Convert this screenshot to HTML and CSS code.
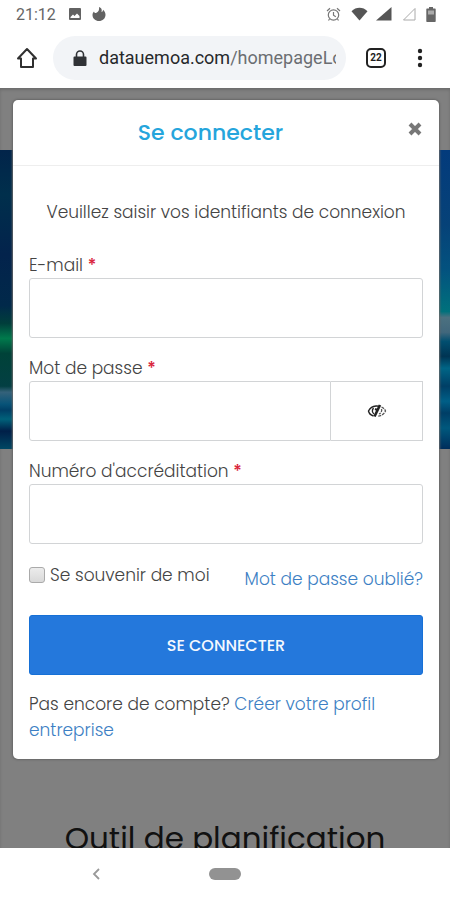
FILE: index.html
```html
<!DOCTYPE html>
<html lang="fr">
<head>
<meta charset="utf-8">
<meta name="viewport" content="width=device-width, initial-scale=1">
<title>Se connecter</title>
<link rel="stylesheet" href="styles.css">
</head>
<body>
<header class="status">
  <time class="clock">21:12</time>
  <svg class="icon" width="14" height="14" viewBox="0 0 14 14"><path fill="#626262" fill-rule="evenodd" d="M2 1h10a1 1 0 0 1 1 1v10a1 1 0 0 1-1 1H2a1 1 0 0 1-1-1V2a1 1 0 0 1 1-1zM2.500 11h9V9L9 6.500 6.500 9 5 7.500 2.500 10z"/></svg>
  <svg class="icon flame" width="14" height="14" viewBox="0 0 14 14"><path fill="#626262" d="M7 0c3 1 3 3 2.500 5 1-.3 1.500-1.300 1.500-2.300 1.500 1.300 2.500 3 2.500 5C13.500 11.500 10.500 14 7 14S.5 11.500.5 8c0-1.500.6-2.600 1.500-3.500.2 1 1 1.600 2 1.600C6.500 5 7.500 3 7 0z"/></svg>
  <span class="spacer"></span>
  <svg class="icon" width="15" height="15" viewBox="0 0 15 15" fill="none" stroke="#777" stroke-width="1.200"><circle cx="7.500" cy="8" r="5.200"/><path d="M7.500 5v3.200l2.300 1.500M1 4l3-2.700M14 4l-3-2.700M3.500 12l-1 1.500M11.500 12l1 1.500"/></svg>
  <svg class="icon wifi" width="17" height="14" viewBox="0 0 17 14"><path fill="#555" d="M.5 4.200C5-.4 12-.4 16.500 4.200L8.500 13.500z"/></svg>
  <svg class="icon signal" width="16" height="14" viewBox="0 0 16 14"><path fill="#555" d="M15.500 0v13.500H0z"/></svg>
  <svg class="icon signal-empty" width="14" height="14" viewBox="0 0 14 14"><path fill="none" stroke="#aaa" d="M13 1.500v11.500H1.500z"/></svg>
  <svg class="icon" width="10" height="15" viewBox="0 0 10 15"><path fill="#666" d="M3 0h4v1.500h2a.7.7 0 0 1 .7.700v12a.7.7 0 0 1-.7.700H1a.7.7 0 0 1-.7-.7v-12a.7.7 0 0 1 .7-.7h2z"/><path fill="#aaa" d="M2 3.500h6v4H2z"/></svg>
</header>

<nav class="toolbar">
  <button class="tool" aria-label="Accueil"><svg width="22" height="22" viewBox="0 0 22 22"><path fill="none" stroke="#303030" stroke-width="2" stroke-linejoin="round" d="M2 11.500L11 2l9 9.500h-3V20H5v-8.500z"/></svg></button>
  <div class="address">
    <svg width="14" height="17" viewBox="0 0 14 17"><path fill="#303236" d="M1.500 6.500h11a1 1 0 0 1 1 1v7.500a1 1 0 0 1-1 1h-11a1 1 0 0 1-1-1V7.500a1 1 0 0 1 1-1z"/><path fill="none" stroke="#303236" stroke-width="1.600" d="M3.500 7V4.500a3.500 3.500 0 0 1 7 0V7"/></svg>
    <span class="url">datauemoa.com<span class="path">/homepageLogin</span></span>
  </div>
  <button class="tabs" aria-label="Onglets">22</button>
  <button class="tool" aria-label="Menu"><svg width="6" height="20" viewBox="0 0 6 20" fill="#222"><circle cx="3" cy="3" r="2.200"/><circle cx="3" cy="10" r="2.200"/><circle cx="3" cy="17" r="2.200"/></svg></button>
</nav>

<main class="viewport">
  <div class="page">
    <div class="hero"><div class="scene-left"></div><div class="scene-right"></div></div>
    <h1 class="page-title">Outil de planification</h1>
  </div>
  <section class="dialog" role="dialog" aria-labelledby="dialog-title">
    <div class="dialog-head">
      <h2 id="dialog-title">Se connecter</h2>
      <button class="close" aria-label="Fermer"><svg width="14" height="14" viewBox="0 0 14 14"><path stroke="#777" stroke-width="4" d="M2 2l10 10M12 2L2 12"/></svg></button>
    </div>
    <form class="form">
      <p class="intro">Veuillez saisir vos identifiants de connexion</p>
      <div class="field">
        <label for="email">E-mail <b>*</b></label>
        <input class="box" id="email" type="email">
      </div>
      <div class="field">
        <label for="password">Mot de passe <b>*</b></label>
        <div class="group">
          <input class="box" id="password" type="password">
          <button class="reveal" type="button" aria-label="Afficher le mot de passe"><svg width="20" height="16" viewBox="0 0 20 16" fill="none" stroke="#222"><path stroke-width="1.400" d="M6.500 13C4 12.200 2 10.500 1.500 8 3 5 5.500 3.300 9 3c1.500-.1 2.500 0 3.500.3"/><path stroke-width="1.300" d="M6.500 5c-1.500 2-1.200 4.500.5 6"/><path stroke-width="2.600" d="M13 2L7.500 13.500"/><path stroke-width="2" d="M8 6l2.500 1"/><path stroke="#555" stroke-width="1.300" stroke-dasharray="3 1" d="M14.500 4c2 .9 3.300 2.200 4 4-1.200 2.800-4 4.800-7.500 5.200M14.500 6c.7 2-.5 4.300-2.500 5"/></svg></button>
        </div>
      </div>
      <div class="field">
        <label for="accreditation">Numéro d'accréditation <b>*</b></label>
        <input class="box" id="accreditation" type="text">
      </div>
      <div class="options">
        <label class="remember"><input type="checkbox">Se souvenir de moi</label>
        <a class="forgot" href="#">Mot de passe oublié?</a>
      </div>
      <button class="submit" type="submit">SE CONNECTER</button>
      <p class="signup">Pas encore de compte? <a href="#">Créer votre profil entreprise</a></p>
    </form>
  </section>
</main>

<footer class="system-nav">
  <button class="back" aria-label="Retour"><svg width="8" height="12" viewBox="0 0 8 12"><path fill="none" stroke="#999" stroke-width="1.800" d="M7 1L2 6l5 5"/></svg></button>
  <button class="pill" aria-label="Écran d'accueil"></button>
  <span></span>
</footer>
</body>
</html>
```
FILE: styles.css
```css
* { box-sizing: border-box; }

body {
  margin: 0;
  min-height: 100vh;
  display: grid;
  grid-template-columns: minmax(0, 1fr);
  grid-template-rows: 28px 60px 1fr 52px;
  background: #fff;
  color: #444;
  font-family: Poppins, Inter, sans-serif;
  font-size: 17px;
  font-weight: 300;
}

h1, h2, p { margin: 0; }
button { padding: 0; border: 0; background: none; font: inherit; }
svg { display: block; }
a { color: #3d7fc4; text-decoration: none; }

.status {
  display: flex;
  align-items: center;
  gap: 10px;
  padding: 0 14px 0 16px;
}
.clock {
  margin-right: 2px;
  color: #666;
  font: 400 16px Roboto, sans-serif;
}
.spacer { flex: 1; }
.wifi { margin-right: -2px; }

.toolbar {
  display: flex;
  align-items: center;
  padding: 0 27px 0 16px;
}
.address {
  flex: 1;
  min-width: 0;
  height: 44px;
  display: flex;
  align-items: center;
  gap: 12px;
  margin: 0 20px 0 15px;
  padding: 0 10px 0 20px;
  border-radius: 22px;
  background: #f2f4f7;
}
.address svg { flex: none; }
.url {
  overflow: hidden;
  white-space: nowrap;
  color: #26282b;
  font: 400 18px/28px Roboto, sans-serif;
}
.path { color: #6b6e72; }
.tabs {
  width: 20px;
  height: 20px;
  margin-right: 31px;
  border: 2px solid #222;
  border-radius: 5px;
  color: #222;
  font: 700 10px/16px Roboto, sans-serif;
}

.viewport {
  display: grid;
  grid-template-columns: minmax(0, 1fr);
  overflow: hidden;
  background: #808080;
  box-shadow: inset 0 2px 3px #6c6c6c;
}
.page, .dialog { grid-area: 1 / 1; }
.page {
  height: 760px;
  overflow: hidden;
  padding-top: 62px;
}
.hero {
  display: grid;
  grid-template-columns: 1fr 1fr;
  height: 299px;
}
.scene-left {
  background: linear-gradient(#02244a, #002f4c 15%, #03234c 35%, #01294a 52%, #003e3b 58%, #007a4c 63%, #004238 68%, #033f43 79%, #35627a 81%, #075378 85%, #003f66 87%, #00617a 90%, #001f48 94%, #004763);
}
.scene-right {
  background: linear-gradient(#033b7c, #064278 25%, #03527f 40%, #00717c 54%, #4c7180 56%, #41677c 61%, #014f70 64%, #003453 69%, #006586 73%, #003f66 79%, #005f87 84%, #003e66 88%, #00587d 93%, #002d5b);
}
.page-title {
  margin-top: 366px;
  color: #111;
  font-size: 31px;
  font-weight: 400;
  line-height: 46px;
  text-align: center;
  white-space: nowrap;
}

.dialog {
  align-self: start;
  margin: 12px 11px 0 13px;
  border-radius: 5px;
  background: #fff;
  box-shadow: 0 0 2px 1px #666;
}
.dialog-head {
  display: grid;
  grid-template-columns: 14px 1fr 14px;
  align-items: center;
  height: 66px;
  padding: 0 17px 0 16px;
  border-bottom: 1px solid #eee;
}
.dialog-head h2 {
  grid-column: 2;
  margin-right: 30px;
  color: #25a5dc;
  font-size: 22px;
  font-weight: 500;
  text-align: center;
}
.close { margin-bottom: 8px; }

.form { padding: 32px 16px 16px; }
.intro {
  margin-bottom: 26px;
  line-height: 28px;
  text-align: center;
}
.field { margin-bottom: 17px; }
.field label {
  display: block;
  line-height: 26px;
}
.field b { color: #d9233a; font-weight: 500; }
.box {
  display: block;
  width: 100%;
  height: 60px;
  padding: 0 12px;
  border: 1px solid #d2d4d6;
  border-radius: 3px;
  background: #fff;
  font: inherit;
}
.group { display: flex; }
.group .box {
  flex: 1;
  min-width: 0;
  border-radius: 3px 0 0 3px;
}
.reveal {
  display: grid;
  place-items: center;
  width: 92px;
  border: 1px solid #d2d4d6;
  border-left: 0;
}
.options {
  display: flex;
  align-items: flex-start;
  justify-content: space-between;
  margin-bottom: 22px;
}
.remember {
  display: flex;
  align-items: center;
  gap: 5px;
  line-height: 28px;
}
.remember input {
  appearance: none;
  width: 16px;
  height: 16px;
  margin: 0;
  border: 1px solid #aaa;
  border-radius: 3px;
  background: linear-gradient(#ececec, #d9d9d9);
}
.forgot { padding-top: 4px; line-height: 28px; }
.submit {
  width: 100%;
  height: 60px;
  border: 1px solid #1670d6;
  border-radius: 3px;
  background: #2478dc;
  color: #f4f8fe;
  font-size: 16px;
  font-weight: 500;
}
.signup {
  margin-top: 16px;
  line-height: 26px;
}

.system-nav {
  display: grid;
  grid-template-columns: 1fr 32px 1fr;
  align-items: center;
  background: #fff;
}
.back { justify-self: start; margin-left: 92px; }
.pill {
  height: 12px;
  border-radius: 6px;
  background: #929292;
}
```
